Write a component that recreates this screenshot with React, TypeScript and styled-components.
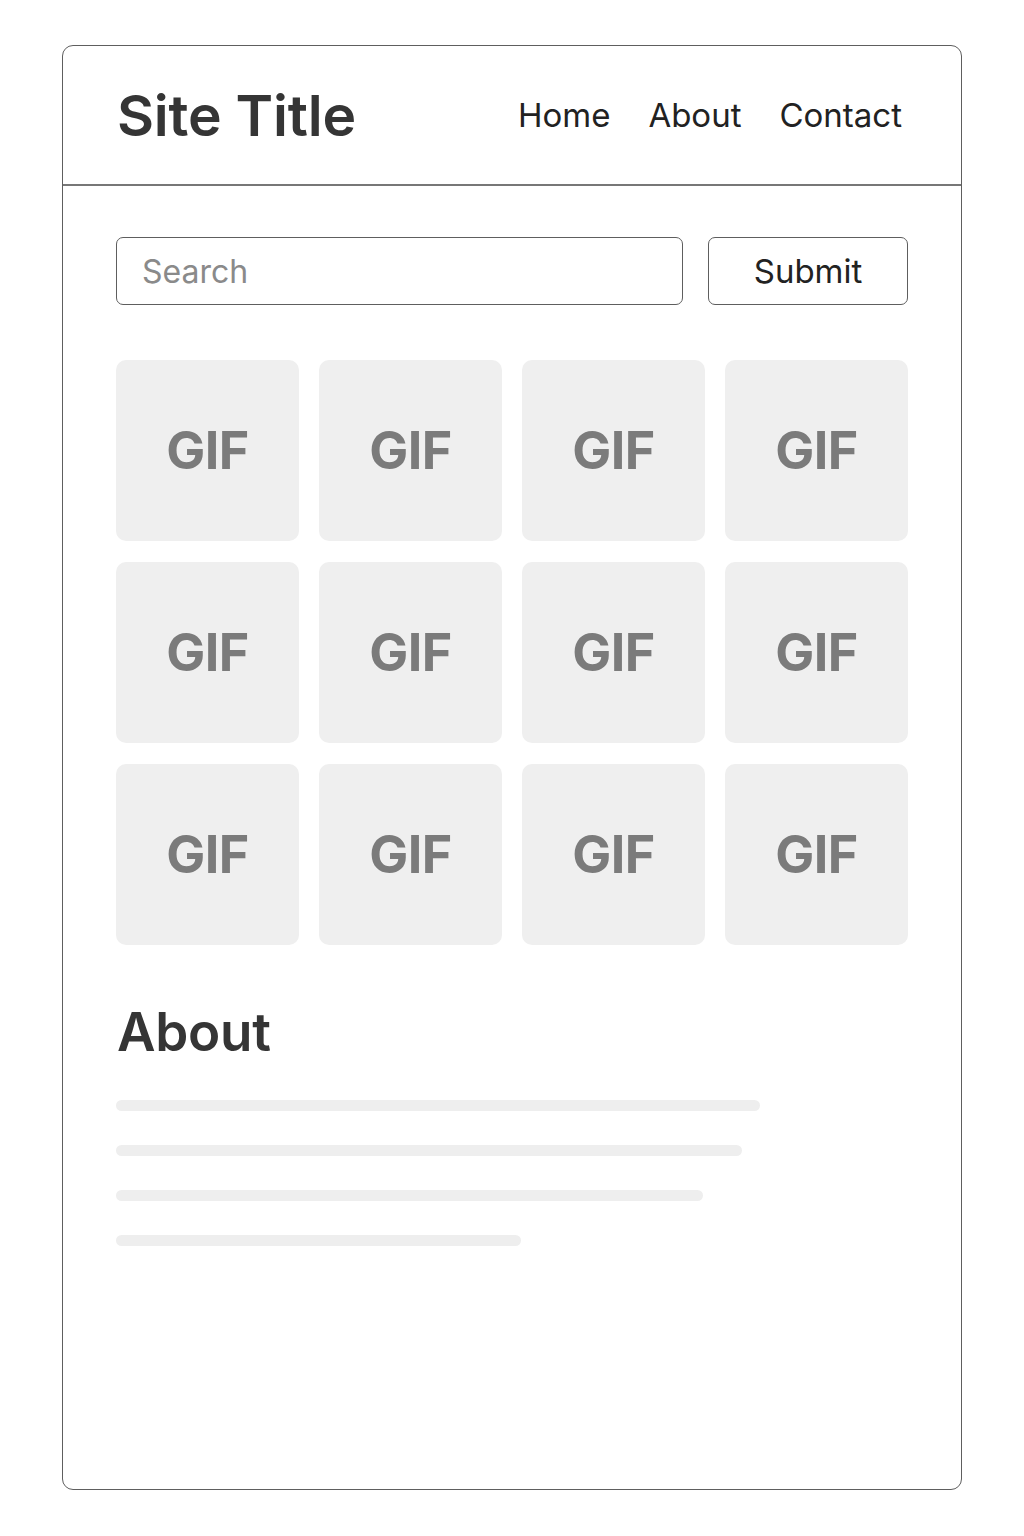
import { FC } from "react";
import styled, { createGlobalStyle } from "styled-components";

const GlobalStyle = createGlobalStyle`
  body {
    margin: 0;
    background: #ffffff;
    font-family: "Inter", "Liberation Sans", sans-serif;
  }
`;

const Page = styled.div`
  padding: 45px 62px;
`;

const Frame = styled.div`
  width: 900px;
  height: 1445px;
  box-sizing: border-box;
  border: 1.5px solid #5e5e5e;
  border-radius: 11px;
  display: flex;
  flex-direction: column;
  overflow: hidden;
`;

const Header = styled.header`
  height: 140px;
  box-sizing: border-box;
  border-bottom: 2px solid #777;
  display: flex;
  align-items: center;
  justify-content: space-between;
  padding: 0 59px 0 54px;
`;

const SiteTitle = styled.h1`
  margin: 0;
  font-size: 57px;
  font-weight: 600;
  color: #353535;
  letter-spacing: -0.2px;
`;

const Nav = styled.nav`
  display: flex;
  gap: 38px;
`;

const NavLink = styled.a`
  font-size: 33px;
  color: #222;
  text-decoration: none;
`;

const Main = styled.main`
  padding: 51px 53px 0 53px;
  display: flex;
  flex-direction: column;
`;

const SearchRow = styled.form`
  display: flex;
  gap: 25px;
`;

const SearchInput = styled.input`
  flex: 1;
  height: 68px;
  box-sizing: border-box;
  border: 1.5px solid #5e5e5e;
  border-radius: 7px;
  padding: 0 25px;
  font-family: inherit;
  font-size: 32px;
  color: #333;
  outline: none;

  &::placeholder {
    color: #8a8a8a;
  }
`;

const SubmitButton = styled.button`
  width: 200px;
  height: 68px;
  box-sizing: border-box;
  background: #fff;
  border: 1.5px solid #5e5e5e;
  border-radius: 7px;
  font-family: inherit;
  font-size: 33px;
  color: #222;
`;

const Grid = styled.div`
  margin-top: 55px;
  display: grid;
  grid-template-columns: repeat(4, 183px);
  grid-auto-rows: 181px;
  column-gap: 20px;
  row-gap: 21px;
`;

const Tile = styled.div`
  background: #efefef;
  border-radius: 10px;
  display: flex;
  align-items: center;
  justify-content: center;
  font-size: 52px;
  font-weight: 700;
  color: #7b7b7b;
  letter-spacing: -0.5px;
`;

const AboutHeading = styled.h2`
  margin: 56px 0 0 1px;
  font-size: 53px;
  font-weight: 600;
  color: #353535;
  line-height: 1.2;
  letter-spacing: -0.3px;
`;

const Lines = styled.div`
  margin-top: 35px;
  display: flex;
  flex-direction: column;
  gap: 34px;
`;

const Line = styled.div<{ $width: number }>`
  width: ${(p) => p.$width}px;
  height: 11px;
  border-radius: 6px;
  background: #eeeeee;
`;

const lineWidths = [644, 626, 587, 405];

const App: FC = () => {
  return (
    <>
      <GlobalStyle />
      <Page>
        <Frame>
          <Header>
            <SiteTitle>Site Title</SiteTitle>
            <Nav>
              <NavLink href="#">Home</NavLink>
              <NavLink href="#">About</NavLink>
              <NavLink href="#">Contact</NavLink>
            </Nav>
          </Header>
          <Main>
            <SearchRow onSubmit={(e) => e.preventDefault()}>
              <SearchInput placeholder="Search" />
              <SubmitButton type="submit">Submit</SubmitButton>
            </SearchRow>
            <Grid>
              {Array.from({ length: 12 }).map((_, i) => (
                <Tile key={i}>GIF</Tile>
              ))}
            </Grid>
            <AboutHeading>About</AboutHeading>
            <Lines>
              {lineWidths.map((w) => (
                <Line key={w} $width={w} />
              ))}
            </Lines>
          </Main>
        </Frame>
      </Page>
    </>
  );
};

export default App;
